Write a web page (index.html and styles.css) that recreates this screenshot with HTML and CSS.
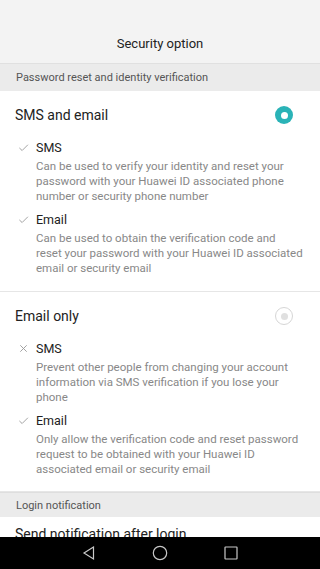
FILE: index.html
```html
<!DOCTYPE html>
<html>
<head>
<meta charset="utf-8">
<link rel="stylesheet" href="styles.css">
</head>
<body>
<div class="screen">
  <div class="content">
    <header class="topbar"><h1 class="title">Security option</h1></header>
    <div class="band band-first">Password reset and identity verification</div>
    <section class="group">
      <div class="option-row">
        <span class="option-label">SMS and email</span>
        <span class="radio radio-on"></span>
      </div>
      <div class="sub">
        <div class="sub-head"><svg class="mark" viewBox="0 0 12 12"><path d="M1.5 6.5 L4.5 9.3 L10.8 3" /></svg><span>SMS</span></div>
        <p class="desc">Can be used to verify your identity and reset your password with your Huawei ID associated phone number or security phone number</p>
      </div>
      <div class="sub">
        <div class="sub-head"><svg class="mark" viewBox="0 0 12 12"><path d="M1.5 6.5 L4.5 9.3 L10.8 3" /></svg><span>Email</span></div>
        <p class="desc">Can be used to obtain the verification code and reset your password with your Huawei ID associated email or security email</p>
      </div>
    </section>
    <section class="group group-last">
      <div class="option-row">
        <span class="option-label">Email only</span>
        <span class="radio radio-off"></span>
      </div>
      <div class="sub">
        <div class="sub-head"><svg class="mark" viewBox="0 0 12 12"><path d="M2.5 2.5 L9.5 9.5 M9.5 2.5 L2.5 9.5" /></svg><span>SMS</span></div>
        <p class="desc">Prevent other people from changing your account information via SMS verification if you lose your phone</p>
      </div>
      <div class="sub">
        <div class="sub-head"><svg class="mark" viewBox="0 0 12 12"><path d="M1.5 6.5 L4.5 9.3 L10.8 3" /></svg><span>Email</span></div>
        <p class="desc">Only allow the verification code and reset password request to be obtained with your Huawei ID associated email or security email</p>
      </div>
    </section>
    <div class="band band-second">Login notification</div>
    <div class="plain-row">Send notification after login</div>
  </div>
  <nav class="navbar">
    <svg class="nav-icon" viewBox="0 0 16 16"><path d="M12.5 2 L3 8 L12.5 14 Z" /></svg>
    <svg class="nav-icon" viewBox="0 0 16 16"><circle cx="8" cy="8" r="6.7" /></svg>
    <svg class="nav-icon" viewBox="0 0 16 16"><rect x="2" y="2" width="12" height="12" rx="0.5" /></svg>
  </nav>
</div>
</body>
</html>
```
FILE: styles.css
```css
* { box-sizing: border-box; }
html, body { margin: 0; padding: 0; }
body {
  font-family: Roboto, "Noto Sans", "Liberation Sans", sans-serif;
  background: #ffffff;
  color: #212121;
}
.screen {
  width: 320px;
  height: 569px;
  display: flex;
  flex-direction: column;
  overflow: hidden;
}
.content {
  flex: 1;
  overflow: hidden;
  background: #ffffff;
}
.topbar {
  height: 64px;
  background: #f3f3f3;
  border-bottom: 1px solid #e0e0e0;
  display: flex;
  justify-content: center;
  padding-top: 34px;
}
.title {
  margin: 0;
  font-size: 13px;
  font-weight: 400;
  line-height: 20px;
  color: #222;
}
.band {
  background: #ebebeb;
  color: #555;
  font-size: 11px;
  padding-left: 16px;
  display: flex;
  align-items: center;
}
.band-first { height: 27px; }
.band-second { height: 25px; border-top: 1px solid #dedede; }
.group {
  border-bottom: 1px solid #e6e6e6;
  padding-bottom: 15px;
}
.group-last { padding-bottom: 14px; }
.option-row {
  height: 47px;
  padding: 1px 27px 0 15px;
  display: flex;
  align-items: center;
  justify-content: space-between;
}
.option-label {
  font-size: 14px;
  color: #222;
}
.plain-row {
  padding: 8px 15px 0;
  font-size: 14px;
  line-height: 18px;
  color: #222;
}
.radio {
  width: 18px;
  height: 18px;
  border-radius: 50%;
  display: flex;
  align-items: center;
  justify-content: center;
}
.radio-on {
  background: #2ab3b7;
}
.radio-on::after {
  content: "";
  width: 7px;
  height: 7px;
  border-radius: 50%;
  background: #fff;
}
.radio-off {
  border: 1px solid #d6d6d6;
}
.radio-off::after {
  content: "";
  width: 7px;
  height: 7px;
  border-radius: 50%;
  background: #e0e0e0;
}
.sub { padding: 0 16px 0 18px; }
.sub + .sub { margin-top: 6px; }
.sub-head {
  display: flex;
  align-items: center;
  height: 18px;
  font-size: 12.5px;
  color: #222;
}
.mark {
  width: 11px;
  height: 11px;
  margin-right: 7px;
  fill: none;
  stroke: #9a9a9a;
  stroke-width: 1;
}
.desc {
  margin: 3px 0 0 18px;
  font-size: 11.5px;
  line-height: 15px;
  color: #888;
}
.navbar {
  height: 32px;
  flex: none;
  background: #000;
  display: flex;
  align-items: center;
  justify-content: center;
  gap: 55px;
}
.nav-icon {
  width: 16px;
  height: 16px;
  fill: none;
  stroke: #c8c8c8;
  stroke-width: 1.2;
}
```
